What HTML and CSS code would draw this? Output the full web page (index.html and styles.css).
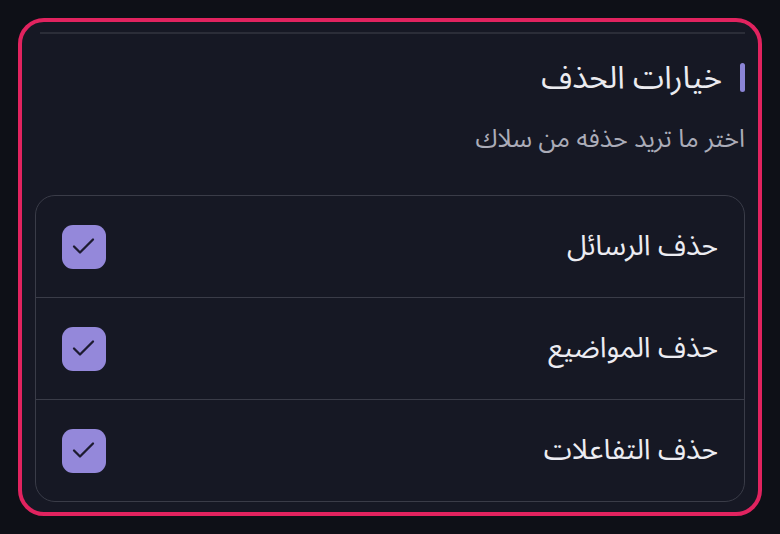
FILE: index.html
```html
<!DOCTYPE html>
<html lang="ar" dir="rtl">
<head>
<meta charset="utf-8">
<link rel="stylesheet" href="styles.css">
</head>
<body>
<div class="page">
  <div class="card">
    <div class="divider"></div>
    <div class="title-row">
      <span class="accent"></span>
      <h2 class="title">خيارات الحذف</h2>
    </div>
    <p class="subtitle">اختر ما تريد حذفه من سلاك</p>
    <div class="list">
      <div class="row">
        <span class="label">حذف الرسائل</span>
        <span class="check"><svg viewBox="0 0 44 44" width="44" height="44"><path d="M12 21.5L18 27.5L31 14.5" fill="none" stroke="#1d1b30" stroke-width="2.3" stroke-linecap="round" stroke-linejoin="round"/></svg></span>
      </div>
      <div class="row">
        <span class="label">حذف المواضيع</span>
        <span class="check"><svg viewBox="0 0 44 44" width="44" height="44"><path d="M12 21.5L18 27.5L31 14.5" fill="none" stroke="#1d1b30" stroke-width="2.3" stroke-linecap="round" stroke-linejoin="round"/></svg></span>
      </div>
      <div class="row">
        <span class="label">حذف التفاعلات</span>
        <span class="check"><svg viewBox="0 0 44 44" width="44" height="44"><path d="M12 21.5L18 27.5L31 14.5" fill="none" stroke="#1d1b30" stroke-width="2.3" stroke-linecap="round" stroke-linejoin="round"/></svg></span>
      </div>
    </div>
  </div>
</div>
</body>
</html>
```
FILE: styles.css
```css
* { box-sizing: border-box; }
html, body {
  margin: 0;
  padding: 0;
  background: #0e1017;
  font-family: "Noto Sans", "Noto Sans Arabic", "DejaVu Sans", sans-serif;
}
.page {
  width: 780px;
  height: 534px;
  padding: 18px;
}
.card {
  height: 498px;
  border: 4px solid #e1235f;
  border-radius: 26px;
  background: #161824;
  padding: 10px 13px 0 13px;
  overflow: hidden;
}
.divider {
  height: 2px;
  background: #2b2d38;
  margin-inline-start: 0;
  margin-inline-end: 5px;
}
.title-row {
  display: flex;
  align-items: center;
  gap: 18px;
  margin-top: 26px;
  height: 34px;
}
.accent {
  width: 5px;
  height: 29px;
  border-radius: 3px;
  background: #8b84d6;
}
.title {
  margin: 0;
  font-size: 31.5px;
  font-weight: 400;
  color: #ebebf0;
  line-height: 34px;
  margin-bottom: 2px;
}
.subtitle {
  margin: 29px 0 0 0;
  font-size: 25px;
  line-height: 28px;
  color: #abacb8;
}
.list {
  margin-top: 44px;
  border: 1.5px solid #3a3c48;
  border-radius: 20px;
}
.row {
  height: 102px;
  display: flex;
  align-items: center;
  justify-content: space-between;
  padding: 0 26px 0 26px;
  border-top: 1.5px solid #3a3c48;
}
.row:first-child { border-top: none; height: 101px; }
.label {
  font-size: 28.5px;
  color: #ececf2;
  line-height: 32px;
  margin-bottom: 6px;
}
.check {
  width: 44px;
  height: 44px;
  border-radius: 11px;
  background: #9488da;
  display: flex;
  align-items: center;
  justify-content: center;
}
.check svg { display: block; }
```
